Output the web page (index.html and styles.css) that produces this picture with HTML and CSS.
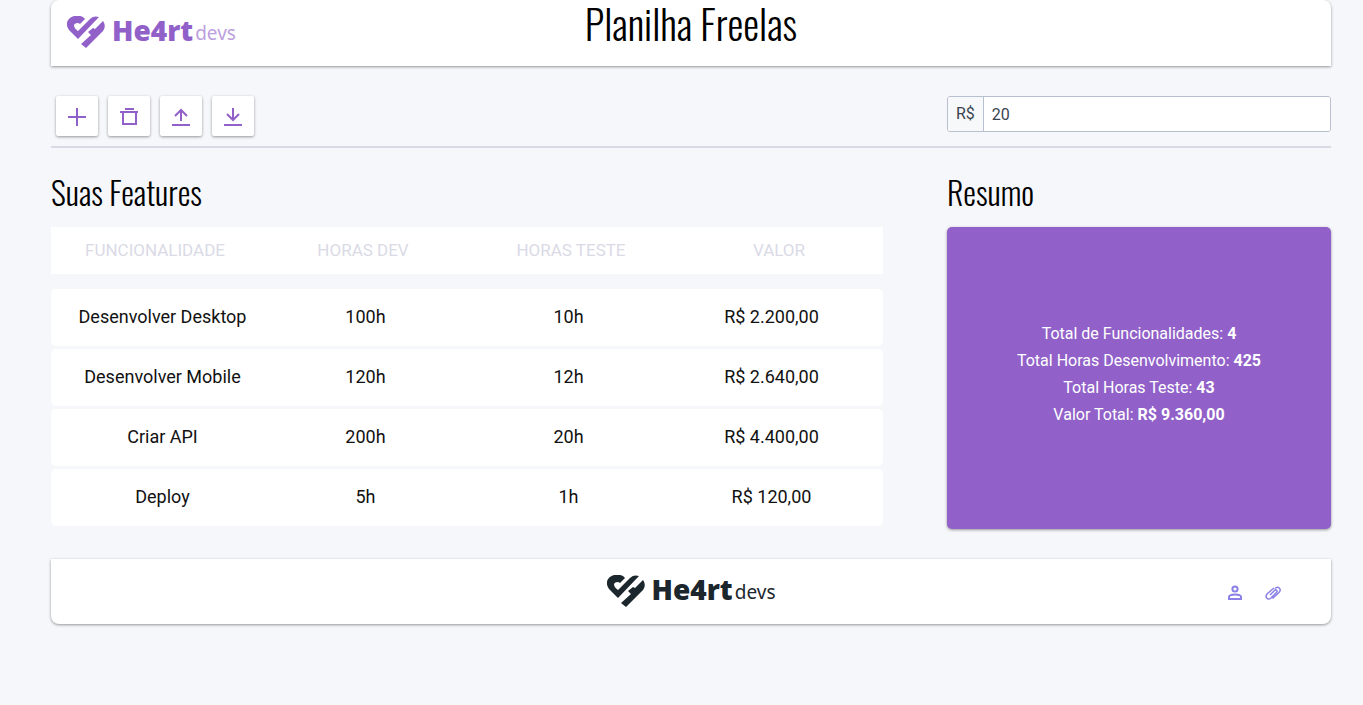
FILE: index.html
```html
<!DOCTYPE html>
<html lang="pt-BR">
<head>
<meta charset="utf-8">
<title>Planilha Freelas</title>
<link rel="stylesheet" href="styles.css">
</head>
<body>
<svg class="symbols">
  <symbol id="heart" viewBox="0 0 38 32">
    <path d="M11 23 2 14C-1 10-1 5 3 2 7-1 12-1 16 1L18 3 13 8C11 6 8 7 7 9 7 11 8 13 11 15L23 3C26 0 29 0 32 1ZM36 5C39 9 38 14 34 17L19 32 14 28 24 19 21 16 26 12 28 13Z"/>
  </symbol>
</svg>
<div class="page">
  <header class="header">
    <a class="logo" href="#" aria-label="He4rt devs">
      <svg class="logo-mark"><use href="#heart"/></svg>
      <span class="logo-name">He4rt</span><span class="logo-sub">devs</span>
    </a>
    <h1 class="title">Planilha Freelas</h1>
  </header>

  <div class="toolbar">
    <div class="actions">
      <button class="action" type="button" aria-label="Adicionar"><svg class="icon" viewBox="0 0 20 20"><path d="M10 1v18M1 10h18"/></svg></button>
      <button class="action" type="button" aria-label="Excluir"><svg class="icon" viewBox="0 0 20 20"><path d="M6 2h9M1 5h18M4 5v12h13V5"/></svg></button>
      <button class="action" type="button" aria-label="Enviar"><svg class="icon" viewBox="0 0 20 20"><path d="M1 18h18M10 14V3M4 9l6-6 6 6"/></svg></button>
      <button class="action" type="button" aria-label="Baixar"><svg class="icon" viewBox="0 0 20 20"><path d="M1 18h18M10 1v12M4 7l6 6 6-6"/></svg></button>
    </div>
    <div class="rate">
      <label class="rate-label" for="rate">R$</label>
      <input class="rate-input" id="rate" type="text" value="20">
    </div>
  </div>

  <main class="content">
    <section>
      <h2 class="heading">Suas Features</h2>
      <table class="features">
        <thead><tr><th>FUNCIONALIDADE</th><th>HORAS DEV</th><th>HORAS TESTE</th><th>VALOR</th></tr></thead>
        <tbody>
          <tr><td>Desenvolver Desktop</td><td>100h</td><td>10h</td><td>R$ 2.200,00</td></tr>
          <tr><td>Desenvolver Mobile</td><td>120h</td><td>12h</td><td>R$ 2.640,00</td></tr>
          <tr><td>Criar API</td><td>200h</td><td>20h</td><td>R$ 4.400,00</td></tr>
          <tr><td>Deploy</td><td>5h</td><td>1h</td><td>R$ 120,00</td></tr>
        </tbody>
      </table>
    </section>
    <section class="summary">
      <h2 class="heading">Resumo</h2>
      <div class="card">
        <p>Total de Funcionalidades: <b>4</b></p>
        <p>Total Horas Desenvolvimento: <b>425</b></p>
        <p>Total Horas Teste: <b>43</b></p>
        <p>Valor Total: <b>R$ 9.360,00</b></p>
      </div>
    </section>
  </main>

  <footer class="footer">
    <a class="logo logo-dark" href="#" aria-label="He4rt devs">
      <svg class="logo-mark"><use href="#heart"/></svg>
      <span class="logo-name">He4rt</span><span class="logo-sub">devs</span>
    </a>
    <nav class="links">
      <a href="#" aria-label="Perfil"><svg class="link-icon" viewBox="0 0 16 16"><circle cx="8" cy="4" r="2.6"/><path d="M2 14v-2c0-2 3-2.500 6-2.500s6 .5 6 2.500v2Z"/></svg></a>
      <a href="#" aria-label="Anexos"><svg class="link-icon link-clip" viewBox="0 0 16 16"><path d="M9 3 2.500 8.500C-1 12 3 16 6 13L11.500 7.500C13 6 11 4 9.500 5.500L5 10M7.500 13.500 14 7.500C17 4 13 0.500 10 3.500"/></svg></a>
    </nav>
  </footer>
</div>
</body>
</html>
```
FILE: styles.css
```css
* { box-sizing: border-box; }
body { margin: 0; background: #f5f7fb; color: #111; font-family: Roboto, sans-serif; font-size: 18px; }
h1, h2, p { margin: 0; }
.symbols { display: none; }
.page { padding: 0 32px 32px 51px; }
.header, .footer { display: grid; grid-template-columns: 1fr auto 1fr; background: #fff; box-shadow: 0 1px 3px rgba(0,0,0,.4); }
.header { min-height: 66px; padding: 0 16px; border-radius: 8px 8px 0 0; }
.logo { display: flex; align-items: center; padding-bottom: 2px; color: #9161c9; text-decoration: none; }
.logo-mark { width: 38px; height: 32px; fill: currentColor; margin-right: 7px; }
.logo-name { font: 900 28px/32px "Noto Sans", sans-serif; padding-bottom: 4px; }
.logo-sub { font: 400 19px/32px "Noto Sans", sans-serif; padding: 2px 0 0 2px; opacity: .6; }
.title, .heading { color: #000; font-family: Oswald, sans-serif; font-weight: 300; }
.title { font-size: 40px; line-height: 46px; }
.toolbar { display: flex; justify-content: space-between; margin-top: 30px; padding-bottom: 10px; border-bottom: 2px solid #dadae6; }
.actions { display: flex; gap: 10px; padding-left: 5px; }
.action { width: 42px; height: 40px; padding: 2px 0 0; border: 0; border-radius: 2px; background: #fff; box-shadow: 0 1px 3px rgba(0,0,0,.4); display: grid; place-items: center; }
.icon { width: 20px; height: 20px; fill: none; stroke: #9161c9; stroke-width: 2; }
.rate { display: flex; width: 30%; height: 36px; border: 1px solid #b8bfce; border-radius: 3px; background: #fff; color: #3b4351; font-size: 16px; line-height: 34px; overflow: hidden; }
.rate-label { padding: 0 8px; background: #f7f8f9; border-right: 1px solid #b8bfce; }
.rate-input { flex: 1; min-width: 0; border: 0; padding: 2px 8px 0; font: inherit; color: inherit; background: #fff; }
.content { display: grid; grid-template-columns: 65fr 30fr; column-gap: 5%; margin-top: 20px; }
.heading { font-size: 32px; line-height: 48px; margin-bottom: 11px; }
.features { display: block; text-align: center; }
.features thead, .features tbody { display: block; }
.features tr { display: grid; grid-template-columns: repeat(4, 1fr); background: #fff; }
.features th, .features td { padding: 0; }
.features th { font-weight: 400; font-size: 17px; line-height: 47px; color: #dadae6; }
.features tbody { margin-top: 15px; }
.features tbody tr { padding: 0 10px; border-radius: 5px; margin-bottom: 3px; }
.features td { line-height: 55px; padding-bottom: 2px; }
.summary { display: flex; flex-direction: column; }
.card { flex: 1; display: flex; flex-direction: column; justify-content: center; padding-bottom: 8px; text-align: center; border-radius: 5px; background: #9161c9; color: #fff; font-size: 16px; line-height: 27px; box-shadow: 0 1px 3px rgba(0,0,0,.4); }
.footer { margin-top: 30px; min-height: 65px; border-radius: 0 0 8px 8px; }
.logo-dark { grid-column: 2; color: #1c262d; }
.logo-dark .logo-sub { opacity: 1; }
.links { display: flex; justify-content: flex-end; align-items: center; gap: 22px; padding: 2px 50px 0 0; }
.links a { display: flex; }
.link-icon { width: 16px; height: 16px; fill: none; stroke: #8a80e5; stroke-width: 2; }
.link-clip { stroke-width: 1.5; }
```
